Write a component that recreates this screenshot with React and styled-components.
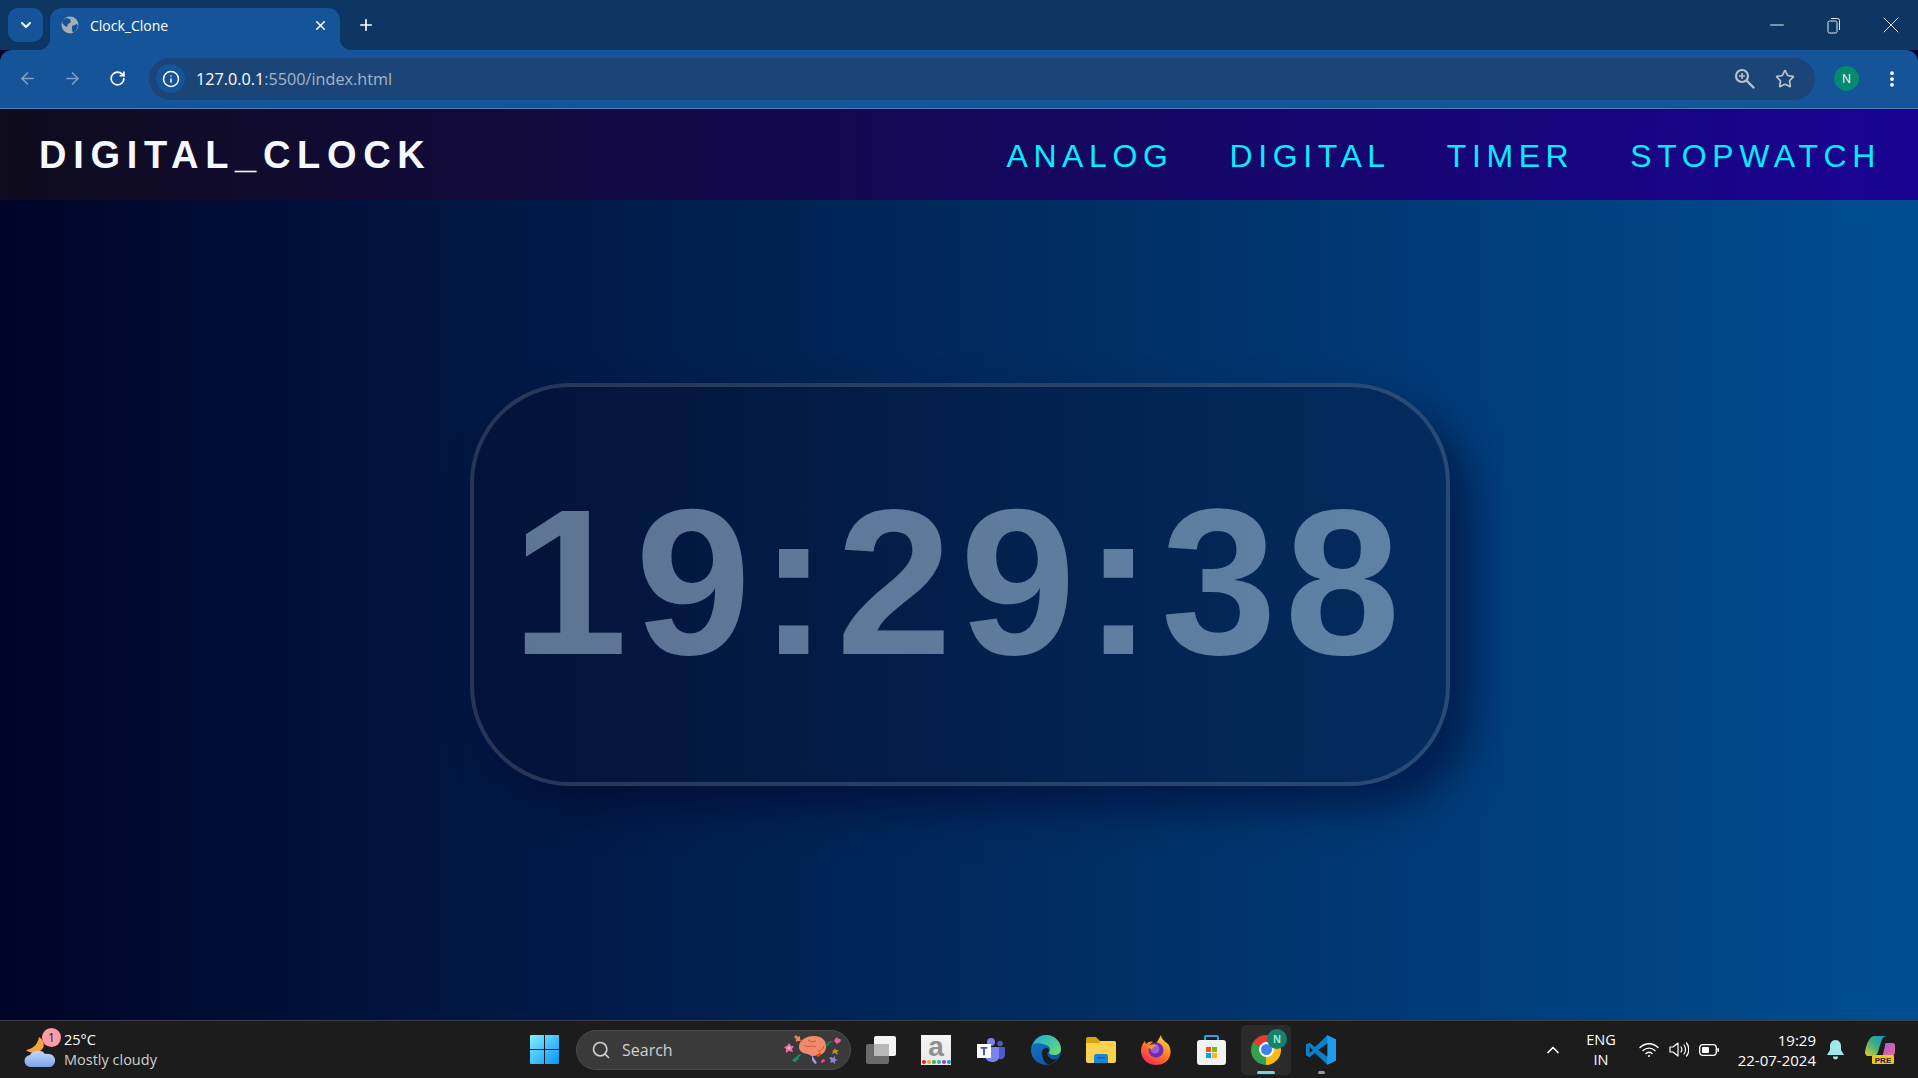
import React from 'react'
import styled, { createGlobalStyle } from 'styled-components'
import { ArrowLeft, ArrowRight, RotateCw, ChevronDown, ChevronUp, X, Plus, Minus, Info, Star, EllipsisVertical, Search as SearchGlyph } from 'lucide-react'

const GlobalStyle = createGlobalStyle`
* { box-sizing: border-box; }
html, body { margin: 0; height: 100%; overflow: hidden; }
body { font-family: "Open Sans", "Noto Sans", sans-serif; background: #000428; }
#root { height: 100%; }
`

const Page = styled.div`
display: flex;
flex-direction: column;
height: 100vh;
`

/* browser chrome */
const TabStrip = styled.div`
display: flex;
height: 50px;
padding: 8px 8px 0;
background: #0e3663;
color: #fff;
`
const TabMenu = styled.div`
display: flex;
align-items: center;
justify-content: center;
width: 35px;
height: 34px;
margin-right: 7px;
border-radius: 10px;
background: #155499;
`
const Tab = styled.div`
position: relative;
display: flex;
align-items: center;
width: 290px;
height: 42px;
padding: 0 12px 8px 11px;
border-radius: 12px 12px 0 0;
background: #155499;
font-size: 14px;
&::before, &::after {
    content: '';
    position: absolute;
    bottom: 0;
    width: 12px;
    height: 12px;
}
&::before {
    left: -12px;
    background: radial-gradient(circle at 0 0, transparent 12px, #155499 12.5px);
}
&::after {
    right: -12px;
    background: radial-gradient(circle at 100% 0, transparent 12px, #155499 12.5px);
}
`
const TabTitle = styled.span`
flex: 1;
margin-left: 11px;
`
const NewTab = styled.div`
display: flex;
align-items: center;
margin-left: 17px;
height: 34px;
`
const WindowControls = styled.div`
display: flex;
margin-left: auto;
height: 34px;
margin-right: 4px;
gap: 27px;
align-items: center;
color: #e6ebf2;
`
const WinControl = styled.div`
display: flex;
align-items: center;
justify-content: center;
width: 30px;
`
const Toolbar = styled.div`
display: flex;
align-items: center;
height: 59px;
padding: 0 16px 1px 0;
background: #155499;
border-bottom: 1px solid #4f7eb5;
border-radius: 12px 12px 0 0;
color: #fff;
`
const ToolButton = styled.div`
display: flex;
align-items: center;
justify-content: center;
width: 45px;
margin-left: ${p => p.$first ? '5px' : '0'};
opacity: ${p => p.$dim ? 0.45 : 1};
`
const AddressBar = styled.div`
display: flex;
align-items: center;
flex: 1;
height: 42px;
margin-left: 9px;
padding: 0 20px 0 7px;
border-radius: 21px;
background: #1b4577;
`
const InfoChip = styled.div`
display: flex;
align-items: center;
justify-content: center;
width: 29px;
height: 29px;
border-radius: 50%;
background: #155499;
`
const Url = styled.div`
margin-left: 11px;
font-size: 16.2px;
color: #a3b5ca;
b {
    font-weight: 400;
    color: #fff;
}
`
const AddressActions = styled.div`
display: flex;
align-items: center;
gap: 20px;
margin-left: auto;
color: #b9c3cf;
`
const Avatar = styled.div`
display: flex;
align-items: center;
justify-content: center;
width: 25px;
height: 25px;
margin-left: 19px;
border-radius: 50%;
background: #038a70;
font-size: 12px;
`
const Dots = styled.div`
display: flex;
margin-left: 23px;
`

/* the clock page */
const Content = styled.div`
display: flex;
flex-direction: column;
flex: 1;
background: linear-gradient(to right, #000428, #004e92);
`
const Nav = styled.nav`
display: flex;
align-items: center;
justify-content: space-between;
height: 91px;
padding: 2px 37px 0 39px;
background: linear-gradient(to right, #0f0c1d, #1a0394);
font-family: "Liberation Sans", Arial, sans-serif;
`
const Logo = styled.h1`
margin: 0;
font-size: 38px;
font-weight: 700;
letter-spacing: 6.7px;
color: #f5f8ff;
`
const Links = styled.ul`
display: flex;
gap: 56px;
margin: 2px 0 0;
padding: 0;
list-style: none;
`
const LinkItem = styled.li`
font-size: 32px;
letter-spacing: 5.6px;
color: #00f0ff;
`
const Stage = styled.main`
display: flex;
justify-content: center;
flex: 1;
padding: 183px 0 0 2px;
`
const ClockCard = styled.div`
display: flex;
align-items: center;
justify-content: center;
width: 980px;
height: 403px;
border: 4px solid rgba(255, 255, 255, 0.15);
border-radius: 100px;
background: rgba(10, 10, 35, 0.3);
box-shadow: 22px 22px 40px rgba(0, 0, 40, 0.5);
font-family: "Liberation Sans", Arial, sans-serif;
`
const Time = styled.div`
margin-top: -5px;
font-size: 208px;
font-weight: 700;
letter-spacing: 8px;
color: rgba(206, 234, 255, 0.45);
`

/* windows taskbar */
const Taskbar = styled.footer`
display: flex;
align-items: center;
height: 58px;
border-top: 1px solid #3d3f44;
background: #1c1c1c;
color: #fff;
`
const Weather = styled.div`
display: flex;
align-items: center;
width: 519px;
padding-left: 24px;
`
const WeatherIcon = styled.div`
position: relative;
width: 32px;
height: 38px;
margin-right: 8px;
`
const WeatherBadge = styled.span`
position: absolute;
top: -3px;
right: -5px;
display: flex;
align-items: center;
justify-content: center;
width: 19px;
height: 19px;
border-radius: 50%;
background: #ff9aa8;
color: #222;
font-size: 12px;
`
const WeatherText = styled.div`
font-size: 14.5px;
line-height: 20px;
span {
    display: block;
    color: #cfcfcf;
}
`
const Apps = styled.div`
display: flex;
align-items: center;
`
const AppCell = styled.div`
position: relative;
display: flex;
align-items: center;
justify-content: center;
width: 50px;
height: 50px;
margin-right: 5px;
border-radius: 5px;
background: ${p => p.$active ? '#2b2b2b' : 'transparent'};
`
const RunDot = styled.span`
position: absolute;
bottom: 1px;
left: 50%;
width: ${p => p.$active ? '18px' : '7px'};
height: 3px;
margin-left: ${p => p.$active ? '-9px' : '-3px'};
border-radius: 2px;
background: ${p => p.$active ? '#76d6de' : '#9a9a9a'};
`
const SearchBox = styled.div`
display: flex;
align-items: center;
justify-content: space-between;
width: 275px;
height: 40px;
margin: 0 5px 0 2px;
padding: 0 6px 0 14px;
border: 1px solid #4a4a4a;
border-radius: 20px;
background: #3a3a3a;
color: #cfcfcf;
font-size: 16px;
`
const SearchLabel = styled.div`
display: flex;
align-items: center;
gap: 11px;
`
const Tray = styled.div`
display: flex;
align-items: center;
margin-left: auto;
`
const TrayIcon = styled.div`
display: flex;
align-items: center;
justify-content: center;
width: ${p => p.$w || 30}px;
`
const Lang = styled.div`
width: 50px;
margin: 0 8px;
text-align: center;
font-size: 14.5px;
line-height: 20px;
`
const Clock = styled.div`
width: 92px;
margin-right: 4px;
text-align: right;
font-size: 15px;
line-height: 20px;
white-space: nowrap;
`

const GlobeIcon = () => (
    <svg width="18" height="18" viewBox="0 0 18 18">
        <circle cx="9" cy="9" r="8.5" fill="#a3adb8" />
        <path d="M5 2l4 1 1 3-3 2-1 3-2-1-3-3 1-3zM11 10l5-2 1 2-2 5-3 2-1-3z" fill="#155499" />
    </svg>
)

const RestoreIcon = () => (
    <svg width="14" height="17" viewBox="0 0 14 17" fill="none" stroke="currentColor" strokeWidth="1">
        <rect x="1" y="4" width="9" height="12" rx="1.5" />
        <path d="M4 1.5h6.5a2 2 0 0 1 2 2V13" />
    </svg>
)

const ZoomLens = () => (
    <svg width="21" height="21" viewBox="0 0 21 21" fill="none" stroke="currentColor">
        <circle cx="8" cy="8" r="6" strokeWidth="2.2" />
        <path d="M12.5 12.5l7 7" strokeWidth="2.4" strokeLinecap="round" />
        <path d="M5 8h6M8 5v6" strokeWidth="1.6" />
    </svg>
)

const WeatherGlyph = () => (
    <svg width="32" height="38" viewBox="0 0 32 38">
        <defs>
            <linearGradient id="cloudFill" x1="0" y1="0" x2="0" y2="1">
                <stop offset="0" stopColor="#c4d9fb" />
                <stop offset="1" stopColor="#7ba4e8" />
            </linearGradient>
        </defs>
        <path d="M15 6C14 13 9 18 2 19c4 4 13 4 17-2 2-4 0-9-4-11z" fill="#f4a53a" />
        <path d="M7 36a6 6 0 0 1-1-12c2-5 12-6 15-1 8-1 11 4 10 8-1 3-3 5-6 5z" fill="url(#cloudFill)" />
    </svg>
)

const WindowsLogo = () => (
    <svg width="29" height="29" viewBox="0 0 29 29">
        <defs>
            <linearGradient id="winFill" x1="0" y1="0" x2="1" y2="1">
                <stop offset="0" stopColor="#7ff0ff" />
                <stop offset="1" stopColor="#0a94fb" />
            </linearGradient>
        </defs>
        <path d="M1 0h13v14H0V1a1 1 0 0 1 1-1zM15 0h13a1 1 0 0 1 1 1v13H15zM0 15h14v14H1a1 1 0 0 1-1-1zM15 15h14v13a1 1 0 0 1-1 1H15z" fill="url(#winFill)" />
    </svg>
)

const BrainSticker = () => (
    <svg width="60" height="34" viewBox="0 0 60 34">
        <path d="M5 10l2 3 3 0-2 3 1 3-4-1-3 2 0-4-2-2 3-1z" fill="#e86ab8" />
        <circle cx="5" cy="15" r="1.4" fill="#f5d34a" />
        <path d="M12 2l2 2 2-1 0 3 1 2-3 0-2 1 0-3-2-2z" fill="#e9825f" />
        <path d="M8 27l4-3 4-3 1 1-3 3 2 1-3 1-1 2-2 0z" fill="#1e8c68" />
        <path d="M15 14c0-7 7-11 15-11 9 0 13 6 12 12-1 5-5 8-9 7-3 2-7 1-9-1-5 0-9-3-9-7z" fill="#f08a6c" />
        <path d="M20 12c4 3 9 0 12 2M24 7c2 2 5 2 8 1M34 18c3 0 5-2 6-5" fill="none" stroke="#c8583f" strokeWidth="1" />
        <path d="M32 22l5-3 0 3-3 2z" fill="#ef4c20" />
        <path d="M28 22l3 5 2 3-2 1-3-4z" fill="#a89ae8" />
        <path d="M41 12l4-4 3 0 1 1-3 1-2 3z" fill="#14795e" />
        <path d="M51 6c1-2 3-2 3 0 2-1 4 1 2 3l-3 2-3-3z" fill="#ef5aa0" />
        <path d="M48 18l2-1 1-2 1 2 3 0-2 2 1 3-3-2-3 1 1-2z" fill="#c08a2a" />
        <path d="M47 24l2 1 2-2 0 3 3 1-3 1 0 3-2-2-3 1 1-3-2-2z" fill="#9a7fe0" />
        <path d="M38 27c1-1 2-1 3 0 0 2-2 2-3 3-1-1-2-2 0-3z" fill="#ef4a8f" />
    </svg>
)

const TaskViewIcon = () => (
    <svg width="30" height="28" viewBox="0 0 30 28">
        <rect x="0" y="8" width="23" height="20" rx="2" fill="#6a6a6a" />
        <rect x="8" y="0" width="22" height="20" rx="2" fill="#f4f4f4" />
        <path d="M8 8h15v12H8z" fill="#b8b8b8" />
    </svg>
)

const LetterTile = styled.div`
display: flex;
flex-direction: column;
align-items: center;
width: 30px;
height: 30px;
background: linear-gradient(#f5f5f5, #e8e8e8);
color: #8f8f8f;
font: 700 28px/23px "Liberation Sans", sans-serif;
`
const ColorDots = styled.div`
display: flex;
gap: 1px;
margin-top: 2px;
`
const ColorDot = styled.span`
width: 4px;
height: 4px;
border-radius: 50%;
background: ${p => p.$c};
`

const AmazonTile = () => (
    <LetterTile>
        a
        <ColorDots>
            {['#f01818', '#f0a020', '#30b050', '#20b8a0', '#9040e0', '#2090e0'].map(c => <ColorDot key={c} $c={c} />)}
        </ColorDots>
    </LetterTile>
)

const TeamsIcon = () => (
    <svg width="28" height="24" viewBox="0 0 28 24">
        <circle cx="14" cy="4" r="4" fill="#7b83eb" />
        <circle cx="23" cy="5.5" r="2.8" fill="#5059c9" />
        <path d="M18 9h9a1 1 0 0 1 1 1v7c0 3-3 5-6 4-2-1-4-6-4-12z" fill="#5059c9" />
        <path d="M8 9h14v10c0 3-3 5-7 5s-7-3-7-6z" fill="#7b83eb" />
        <rect x="0" y="6" width="14" height="14" fill="#fff" />
        <path d="M3.5 9h7v1.8H8v6.4H6v-6.4H3.5z" fill="#4b53bc" />
    </svg>
)

const EdgeIcon = () => (
    <svg width="30" height="30" viewBox="0 0 30 30">
        <defs>
            <linearGradient id="edgeTop" x1="0" y1="0" x2="1" y2="1">
                <stop offset="0" stopColor="#1fa8d8" />
                <stop offset="1" stopColor="#6fe06a" />
            </linearGradient>
            <linearGradient id="edgeLow" x1="0" y1="0" x2="1" y2="1">
                <stop offset="0" stopColor="#1578c8" />
                <stop offset="1" stopColor="#0b4c9a" />
            </linearGradient>
        </defs>
        <circle cx="15" cy="15" r="15" fill="url(#edgeLow)" />
        <path d="M2 9C5 3 10 0 15 0c9 0 15 7 15 14 0 4-3 6-7 6-3 0-5-1-5-3 2-2 1-6-3-7-5-2-10-2-13-1z" fill="url(#edgeTop)" />
        <path d="M11 17c0-2 2-4 5-4 1 0 2 1 2 3-2 1-2 3-1 5 2 3 5 4 9 3-3 4-7 6-10 5-3-2-5-7-5-12z" fill="#1c1c1c" />
    </svg>
)

const FolderIcon = () => (
    <svg width="30" height="26" viewBox="0 0 30 26">
        <path d="M0 2a2 2 0 0 1 2-2h8l4 4h14a2 2 0 0 1 2 2v4H0z" fill="#d9a20f" />
        <path d="M0 6h12l3-2h13a2 2 0 0 1 2 2v18a2 2 0 0 1-2 2H2a2 2 0 0 1-2-2z" fill="#fbd24e" />
        <path d="M8 19a2 2 0 0 1 2-2h10a2 2 0 0 1 2 2v7H8z" fill="#1b86d8" />
        <path d="M11 20h8v1.4h-8z" fill="#0b5ea8" />
    </svg>
)

const FirefoxIcon = () => (
    <svg width="30" height="30" viewBox="0 0 30 30">
        <defs>
            <linearGradient id="foxFill" x1="0.8" y1="0" x2="0.2" y2="1">
                <stop offset="0" stopColor="#ffd83a" />
                <stop offset="0.5" stopColor="#ff7a20" />
                <stop offset="1" stopColor="#f5245a" />
            </linearGradient>
        </defs>
        <path d="M20 0c0 4 4 6 7 9 3 4 3 9 2 12-2 6-8 9-14 9C7 30 0 24 0 16 0 11 2 8 4 6l1 3c2-2 5-3 7-2-2 1-4 3-4 5 4-1 7 1 7 3-1 1-3 1-4 1z" fill="url(#foxFill)" />
        <circle cx="15" cy="15" r="7.5" fill="#6d2bb8" />
        <circle cx="14" cy="14" r="4.5" fill="#9a5ee0" />
        <path d="M7 11c3-2 7-2 10 0-3 0-5 1-6 3-2 0-3-1-4-3z" fill="#ff9a20" />
    </svg>
)

const StoreIcon = () => (
    <svg width="29" height="30" viewBox="0 0 29 30">
        <path d="M8 6V2a1 1 0 0 1 1-1h11a1 1 0 0 1 1 1v4" fill="none" stroke="#22a8e8" strokeWidth="2" />
        <rect x="0" y="5" width="29" height="25" rx="3" fill="#f3f3f3" />
        <path d="M9 12h5v5H9z" fill="#f25022" />
        <path d="M15 12h5v5h-5z" fill="#7fba00" />
        <path d="M9 18h5v5H9z" fill="#00a4ef" />
        <path d="M15 18h5v5h-5z" fill="#ffb900" />
    </svg>
)

const ChromeBall = styled.div`
display: flex;
align-items: center;
justify-content: center;
width: 30px;
height: 30px;
border-radius: 50%;
background: conic-gradient(from -60deg, #e33b2e 0 120deg, #f9bc15 120deg 240deg, #31a24c 240deg 360deg);
`
const ChromeCore = styled.div`
width: 15px;
height: 15px;
border: 2px solid #fff;
border-radius: 50%;
background: #3b82f0;
`
const ProfileBadge = styled.span`
position: absolute;
top: 4px;
right: 4px;
display: flex;
align-items: center;
justify-content: center;
width: 20px;
height: 20px;
border-radius: 50%;
background: #15806f;
color: #9be8d8;
font-size: 10px;
font-weight: 700;
`

const VsCodeIcon = () => (
    <svg width="30" height="30" viewBox="0 0 100 100">
        <path d="M71 99 100 85V15L71 1 30 40 12 26 0 32v36l12 6 18-14z" fill="#0a7fcb" />
        <path d="M71 1 100 15v70L71 99z" fill="#1f9cf0" />
        <path d="M71 28 40 50l31 22z" fill="#1c1c1c" />
        <path d="M12 38 22 50 12 62z" fill="#1c1c1c" />
    </svg>
)

const WifiIcon = () => (
    <svg width="20" height="16" viewBox="0 0 20 16" fill="none" stroke="#fff" strokeWidth="1.4" strokeLinecap="round">
        <path d="M1 5.5c5-5 13-5 18 0M4 8.5c3.5-3.2 8.5-3.2 12 0M7 11.5c1.8-1.4 4.2-1.4 6 0" />
        <circle cx="10" cy="14" r="1" fill="#fff" stroke="none" />
    </svg>
)

const VolumeIcon = () => (
    <svg width="20" height="17" viewBox="0 0 20 17" fill="none" stroke="#fff" strokeWidth="1.2" strokeLinecap="round" strokeLinejoin="round">
        <path d="M1 6v5h3l5 4V2L4 6z" />
        <path d="M12 6c1 1.5 1 3.5 0 5M15 4c2 2.5 2 6.5 0 9M17.5 2c3 3.5 3 9.5 0 13" />
    </svg>
)

const BatteryIcon = () => (
    <svg width="20" height="12" viewBox="0 0 20 12">
        <rect x="0.7" y="0.7" width="16.6" height="10.6" rx="3" fill="none" stroke="#fff" strokeWidth="1.3" />
        <rect x="3" y="3" width="7" height="6" rx="1" fill="#fff" />
        <rect x="18.3" y="4" width="1.7" height="4" rx=".8" fill="#fff" />
    </svg>
)

const BellIcon = () => (
    <svg width="17" height="20" viewBox="0 0 17 20">
        <path d="M8.5 0c3.5 0 5.5 3 5.5 6v4l3 5H0l3-5V6c0-3 2-6 5.5-6z" fill="#9fe8ec" />
        <path d="M6 16.5h5c0 2-1 3-2.5 3S6 18.5 6 16.5z" fill="#9fe8ec" />
    </svg>
)

const CopilotIcon = () => (
    <svg width="30" height="28" viewBox="0 0 30 28">
        <defs>
            <linearGradient id="copLeft" x1="0" y1="1" x2="1" y2="0">
                <stop offset="0" stopColor="#e8c832" />
                <stop offset="0.5" stopColor="#38b07a" />
                <stop offset="1" stopColor="#1d8fe0" />
            </linearGradient>
            <linearGradient id="copRight" x1="0" y1="0" x2="1" y2="1">
                <stop offset="0" stopColor="#a050e0" />
                <stop offset="1" stopColor="#f07090" />
            </linearGradient>
        </defs>
        <path d="M9 0h13c-3 0-5 2-6 6l-3 10c-1 3-3 4-6 4H3c-2 0-3-2-3-4 1-6 4-16 9-16z" fill="url(#copLeft)" />
        <path d="M21 7h7c1 0 2 1 2 2v6c0 4-3 8-8 8H12c3 0 5-2 6-5l2-8c0-2 0-3 1-3z" fill="url(#copRight)" />
        <rect x="7" y="19" width="22" height="9" rx="1.5" fill="#f5c518" />
        <text x="18" y="26.5" textAnchor="middle" fontFamily="Liberation Sans" fontWeight="700" fontSize="8" fill="#222">PRE</text>
    </svg>
)

const App = () => {
    return (
        <Page>
            <GlobalStyle />
            <TabStrip>
                <TabMenu><ChevronDown size={16} strokeWidth={3} /></TabMenu>
                <Tab>
                    <GlobeIcon />
                    <TabTitle>Clock_Clone</TabTitle>
                    <X size={15} strokeWidth={2.5} />
                </Tab>
                <NewTab><Plus size={18} strokeWidth={2.2} /></NewTab>
                <WindowControls>
                    <WinControl><Minus size={22} strokeWidth={1.1} /></WinControl>
                    <WinControl><RestoreIcon /></WinControl>
                    <WinControl><X size={28} strokeWidth={0.8} /></WinControl>
                </WindowControls>
            </TabStrip>
            <Toolbar>
                <ToolButton $first $dim><ArrowLeft size={19} strokeWidth={2} /></ToolButton>
                <ToolButton $dim><ArrowRight size={19} strokeWidth={2} /></ToolButton>
                <ToolButton><RotateCw size={17} strokeWidth={2.4} /></ToolButton>
                <AddressBar>
                    <InfoChip><Info size={18} strokeWidth={2} /></InfoChip>
                    <Url><b>127.0.0.1</b>:5500/index.html</Url>
                    <AddressActions>
                        <ZoomLens />
                        <Star size={20} strokeWidth={2} />
                    </AddressActions>
                </AddressBar>
                <Avatar>N</Avatar>
                <Dots><EllipsisVertical size={20} strokeWidth={2.5} /></Dots>
            </Toolbar>
            <Content>
                <Nav>
                    <Logo>DIGITAL_CLOCK</Logo>
                    <Links>
                        <LinkItem>ANALOG</LinkItem>
                        <LinkItem>DIGITAL</LinkItem>
                        <LinkItem>TIMER</LinkItem>
                        <LinkItem>STOPWATCH</LinkItem>
                    </Links>
                </Nav>
                <Stage>
                    <ClockCard>
                        <Time>19:29:38</Time>
                    </ClockCard>
                </Stage>
            </Content>
            <Taskbar>
                <Weather>
                    <WeatherIcon>
                        <WeatherGlyph />
                        <WeatherBadge>1</WeatherBadge>
                    </WeatherIcon>
                    <WeatherText>25°C<span>Mostly cloudy</span></WeatherText>
                </Weather>
                <Apps>
                    <AppCell><WindowsLogo /></AppCell>
                    <SearchBox>
                        <SearchLabel><SearchGlyph size={20} strokeWidth={2} />Search</SearchLabel>
                        <BrainSticker />
                    </SearchBox>
                    <AppCell><TaskViewIcon /></AppCell>
                    <AppCell><AmazonTile /></AppCell>
                    <AppCell><TeamsIcon /></AppCell>
                    <AppCell><EdgeIcon /></AppCell>
                    <AppCell><FolderIcon /></AppCell>
                    <AppCell><FirefoxIcon /></AppCell>
                    <AppCell><StoreIcon /></AppCell>
                    <AppCell $active>
                        <ChromeBall><ChromeCore /></ChromeBall>
                        <ProfileBadge>N</ProfileBadge>
                        <RunDot $active />
                    </AppCell>
                    <AppCell><VsCodeIcon /><RunDot /></AppCell>
                </Apps>
                <Tray>
                    <TrayIcon><ChevronUp size={20} strokeWidth={2} /></TrayIcon>
                    <Lang>ENG<br />IN</Lang>
                    <TrayIcon><WifiIcon /></TrayIcon>
                    <TrayIcon><VolumeIcon /></TrayIcon>
                    <TrayIcon><BatteryIcon /></TrayIcon>
                    <Clock>19:29<br />22-07-2024</Clock>
                    <TrayIcon><BellIcon /></TrayIcon>
                    <TrayIcon $w={60}><CopilotIcon /></TrayIcon>
                    <TrayIcon $w={8} />
                </Tray>
            </Taskbar>
        </Page>
    )
}

export default App
